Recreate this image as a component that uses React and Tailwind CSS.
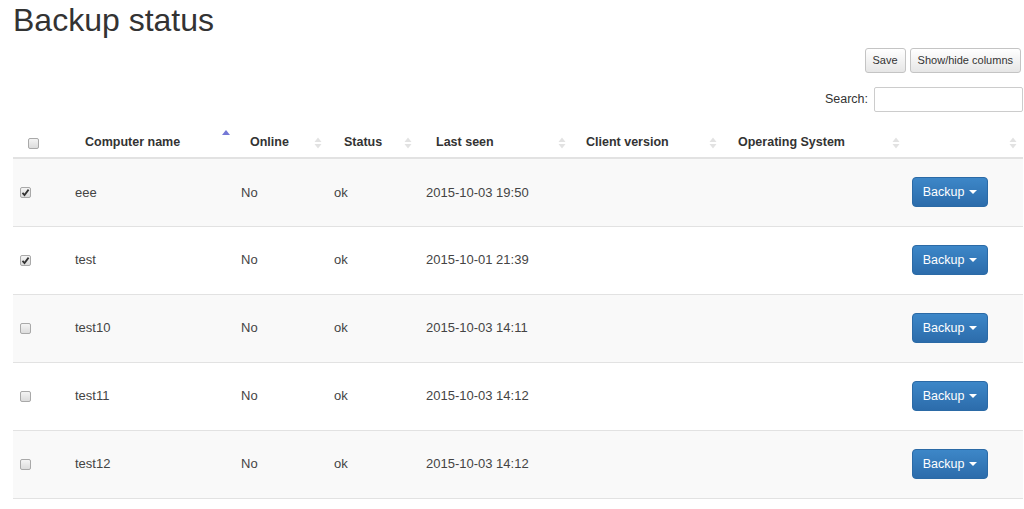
import React from 'react';

const rows = [
  { name: 'eee', online: 'No', status: 'ok', seen: '2015-10-03 19:50', checked: true },
  { name: 'test', online: 'No', status: 'ok', seen: '2015-10-01 21:39', checked: true },
  { name: 'test10', online: 'No', status: 'ok', seen: '2015-10-03 14:11', checked: false },
  { name: 'test11', online: 'No', status: 'ok', seen: '2015-10-03 14:12', checked: false },
  { name: 'test12', online: 'No', status: 'ok', seen: '2015-10-03 14:12', checked: false },
];

function Check({ checked }) {
  return (
    <span className="inline-flex w-[11px] h-[11px] items-center justify-center rounded-[2px] border border-[#a9a9a9] bg-gradient-to-b from-[#f4f4f4] to-[#dcdcdc]">
      {checked && (
        <svg width="9" height="9" viewBox="0 0 9 9">
          <path d="M1.5 4.8 L3.5 7 L7.6 1.6" fill="none" stroke="#333" strokeWidth="1.8" />
        </svg>
      )}
    </span>
  );
}

function SortIcon({ dir }) {
  if (dir === 'asc') {
    return (
      <svg width="8" height="12" viewBox="0 0 8 12" className="-translate-y-[7px]">
        <path d="M0 5 L4 0 L8 5 Z" fill="#7478d6" />
      </svg>
    );
  }
  return (
    <svg width="8" height="12" viewBox="0 0 8 12">
      <path d="M0.5 5 L4 0.5 L7.5 5 Z" fill="#e2e2e2" />
      <path d="M0.5 7 L4 11.5 L7.5 7 Z" fill="#e2e2e2" />
    </svg>
  );
}

const columns = [
  { label: 'Computer name', pl: 'pl-[20px]', pr: 'pr-[1px]', dir: 'asc' },
  { label: 'Online', pl: 'pl-[19px]', pr: 'pr-[2px]' },
  { label: 'Status', pl: 'pl-[20px]', pr: 'pr-[4px]' },
  { label: 'Last seen', pl: 'pl-[20px]', pr: 'pr-[10px]' },
  { label: 'Client version', pl: 'pl-[10px]', pr: 'pr-[11px]' },
  { label: 'Operating System', pl: 'pl-[10px]', pr: 'pr-[2px]' },
  { label: '', pl: 'pl-[10px]', pr: 'pr-[6px]' },
];

export default function App() {
  return (
    <div className="min-h-[509px] bg-white pl-[13px] pr-[1px] text-[#333] font-['Liberation_Sans',Arial,sans-serif]">
      <h1 className="pt-[3px] text-[32px] leading-[35px] font-normal text-[#333]">Backup status</h1>

      <div className="mt-[10px] flex justify-end gap-[4px] pr-[2px]">
        <button className="h-[25px] px-[7px] rounded-[3px] border border-[#c4c4c4] bg-gradient-to-b from-white to-[#e6e6e6] text-[11px] text-[#333]">
          Save
        </button>
        <button className="h-[25px] px-[7px] rounded-[3px] border border-[#c4c4c4] bg-gradient-to-b from-white to-[#e6e6e6] text-[11px] text-[#333]">
          Show/hide columns
        </button>
      </div>

      <div className="mt-[14px] flex justify-end items-center gap-[6px]">
        <label className="text-[12.5px] text-[#333]">Search:</label>
        <input className="w-[149px] h-[25px] rounded-[2px] border border-[#ccc] outline-none" />
      </div>

      <table className="mt-[16px] w-[1010px] table-fixed border-collapse">
        <colgroup>
          <col className="w-[52px]" />
          <col className="w-[166px]" />
          <col className="w-[93px]" />
          <col className="w-[92px]" />
          <col className="w-[160px]" />
          <col className="w-[152px]" />
          <col className="w-[174px]" />
          <col className="w-[121px]" />
        </colgroup>
        <thead>
          <tr className="h-[30px] border-b-2 border-[#e2e2e2]">
            <th className="pl-[15px] text-left align-middle">
              <span className="flex pt-[1px]">
                <Check checked={false} />
              </span>
            </th>
            {columns.map((c, i) => (
              <th key={i} className={`${c.pl} ${c.pr} align-middle`}>
                <div className="flex items-center justify-between text-[12.5px] font-bold text-[#333]">
                  <span>{c.label}</span>
                  <SortIcon dir={c.dir} />
                </div>
              </th>
            ))}
          </tr>
        </thead>
        <tbody>
          {rows.map((r, i) => (
            <tr
              key={r.name}
              className={`h-[68px] border-b border-[#e2e2e2] ${i % 2 === 0 ? 'bg-[#f9f9f9]' : 'bg-white'}`}
            >
              <td className="pl-[7px] align-middle">
                <span className="flex">
                  <Check checked={r.checked} />
                </span>
              </td>
              <td className="pl-[10px] text-[13px] text-[#444]">{r.name}</td>
              <td className="pl-[10px] text-[13px] text-[#444]">{r.online}</td>
              <td className="pl-[10px] text-[13px] text-[#444]">{r.status}</td>
              <td className="pl-[10px] text-[13px] text-[#444]">{r.seen}</td>
              <td></td>
              <td></td>
              <td className="pl-[10px]">
                <button className="flex h-[30px] w-[76px] items-center justify-center gap-[5px] rounded-[4px] border border-[#2b6aa6] bg-gradient-to-b from-[#3d87c8] to-[#2c6cab] text-[12.5px] text-white">
                  Backup
                  <svg width="8" height="4" viewBox="0 0 8 4">
                    <path d="M0 0 L8 0 L4 4 Z" fill="#fff" />
                  </svg>
                </button>
              </td>
            </tr>
          ))}
        </tbody>
      </table>
    </div>
  );
}
